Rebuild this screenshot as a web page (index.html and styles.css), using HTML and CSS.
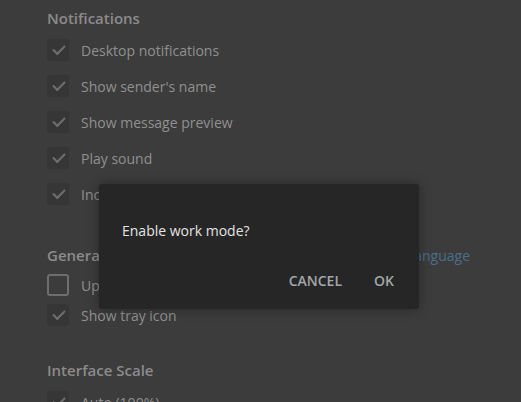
FILE: index.html
```html
<!DOCTYPE html>
<html lang="en">
<head>
    <meta charset="UTF-8">
    <title>Settings</title>
    <link rel="stylesheet" href="styles.css">
</head>
<body>
    <div class="settings">
        <div class="section">
            <h2>Notifications</h2>
            <div class="row"><span class="box checked"></span>Desktop notifications</div>
            <div class="row"><span class="box checked"></span>Show sender's name</div>
            <div class="row"><span class="box checked"></span>Show message preview</div>
            <div class="row"><span class="box checked"></span>Play sound</div>
            <div class="row"><span class="box checked"></span>Include muted chats in unread count</div>
        </div>

        <div class="section general">
            <div class="section-head">
                <h2>General</h2>
                <a class="link" href="#">Change language</a>
            </div>
            <div class="row short"><span class="box"></span>Update automatically</div>
            <div class="row short"><span class="box checked"></span>Show tray icon</div>
        </div>

        <div class="section scale">
            <h2>Interface Scale</h2>
            <div class="row"><span class="box checked"></span>Auto (100%)</div>
        </div>
    </div>

    <div class="dialog">
        <p class="question">Enable work mode?</p>
        <div class="buttons">
            <button>Cancel</button>
            <button>OK</button>
        </div>
    </div>
</body>
</html>
```

FILE: styles.css
```css
body {
    margin: 0;
    background-color: #3c3c3c;
    font-family: "Open Sans", sans-serif;
    overflow: hidden;
    height: 402px;
    position: relative;
}
.settings {
    padding: 6px 0 0 47px;
}
h2 {
    margin: 0;
    font-size: 15px;
    font-weight: 600;
    color: #8b8b8b;
    line-height: 24px;
}
.row {
    display: flex;
    align-items: center;
    height: 22px;
    margin-top: 14px;
    font-size: 14px;
    color: #909090;
}
.section h2 + .row {
    margin-top: 9px;
}
.row.short {
    margin-top: 8px;
}
.box {
    width: 22px;
    height: 22px;
    box-sizing: border-box;
    border: 2px solid #6e6e6e;
    border-radius: 3px;
    margin-right: 12px;
    position: relative;
}
.box.checked {
    border: none;
    background-color: #363636;
}
.box.checked::after {
    content: "";
    position: absolute;
    left: 6px;
    top: 6px;
    width: 10px;
    height: 5px;
    border-left: 2px solid #6f6f6f;
    border-bottom: 2px solid #6f6f6f;
    transform: rotate(-45deg);
}
.general {
    margin-top: 38px;
}
.section-head {
    display: flex;
    justify-content: space-between;
    align-items: center;
    width: 423px;
}
.general .section-head + .row {
    margin-top: 7px;
}
.link {
    color: #4a6f88;
    text-decoration: none;
    font-size: 14px;
}
.scale {
    margin-top: 32px;
}
.scale .row {
    margin-top: 8px;
}
.dialog {
    position: absolute;
    left: 99px;
    top: 184px;
    width: 320px;
    height: 125px;
    box-sizing: border-box;
    background-color: #262626;
    border-radius: 3px;
    box-shadow: 0 0 12px rgba(0, 0, 0, 0.35);
    padding: 37px 25px 0 23px;
}
.question {
    margin: 0;
    font-size: 14px;
    color: #e3e3e3;
    line-height: 20px;
}
.buttons {
    display: flex;
    justify-content: flex-end;
    gap: 32px;
    margin-top: 30px;
}
.buttons button {
    background: none;
    border: none;
    padding: 0;
    font-family: "Open Sans", sans-serif;
    font-size: 14px;
    font-weight: 600;
    text-transform: uppercase;
    color: #a2a6aa;
}
```
